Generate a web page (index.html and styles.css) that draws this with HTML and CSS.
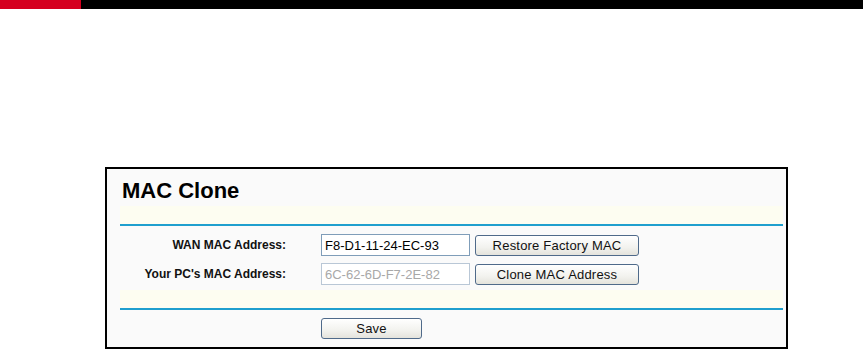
FILE: index.html
```html
<!DOCTYPE html>
<html lang="en">
<head>
    <meta charset="UTF-8">
    <title>MAC Clone</title>
    <link rel="stylesheet" href="styles.css">
</head>
<body>
    <div class="topbar"><div class="topbar-red"></div></div>

    <div class="panel">
        <h1 class="title">MAC Clone</h1>
        <div class="band"></div>

        <div class="rows">
            <label class="row-label" for="wanMac">WAN MAC Address:</label>
            <input class="mac-input" type="text" id="wanMac" value="F8-D1-11-24-EC-93">
            <button class="btn btn-wide" type="button">Restore Factory MAC</button>

            <label class="row-label" for="pcMac">Your PC's MAC Address:</label>
            <input class="mac-input mac-disabled" type="text" id="pcMac" value="6C-62-6D-F7-2E-82" readonly>
            <button class="btn btn-wide" type="button">Clone MAC Address</button>
        </div>

        <div class="band"></div>

        <div class="save-row">
            <button class="btn btn-save" type="button">Save</button>
        </div>
    </div>
</body>
</html>
```

FILE: styles.css
```css
body {
    margin: 0;
    background: #ffffff;
    font-family: "Liberation Sans", Arial, sans-serif;
}
.topbar {
    height: 9px;
    background: #000000;
}
.topbar-red {
    width: 81px;
    height: 9px;
    background: #d5001f;
}
.panel {
    width: 663px;
    margin: 158px 0 0 105px;
    padding: 0 3px 0 13px;
    border: 2px solid #000000;
    background: #fafafa;
}
.title {
    margin: 0 0 3px;
    padding: 10px 0 0 2px;
    height: 24px;
    font-size: 22px;
    line-height: 24px;
    font-weight: bold;
    color: #000000;
}
.band {
    height: 18px;
    background: #fdfdf1;
    border-bottom: 2px solid #1f9fce;
}
.rows {
    display: grid;
    grid-template-columns: 196px 149px 164px;
    column-gap: 5px;
    row-gap: 7px;
    align-items: center;
    padding: 8px 0 5px;
}
.row-label {
    text-align: right;
    padding-right: 30px;
    font-size: 12px;
    font-weight: bold;
    color: #111111;
}
.mac-input {
    width: 149px;
    height: 22px;
    box-sizing: border-box;
    padding: 0 3px;
    border: 1px solid #7f9db9;
    background: #ffffff;
    font-family: "Liberation Sans", Arial, sans-serif;
    font-size: 13px;
    color: #000000;
}
.mac-disabled {
    color: #a8a8a8;
    border-color: #b9c7d6;
}
.btn {
    height: 21px;
    box-sizing: border-box;
    border: 1px solid #4f6a8a;
    border-radius: 3px;
    background: linear-gradient(#ffffff, #f2f2ee 60%, #e4e3dc);
    font-family: "Liberation Sans", Arial, sans-serif;
    font-size: 13px;
    letter-spacing: 0.2px;
    color: #111111;
    padding: 0;
    cursor: pointer;
}
.btn-wide {
    width: 164px;
}
.save-row {
    padding: 8px 0 8px 201px;
}
.btn-save {
    width: 101px;
    display: block;
}
```
